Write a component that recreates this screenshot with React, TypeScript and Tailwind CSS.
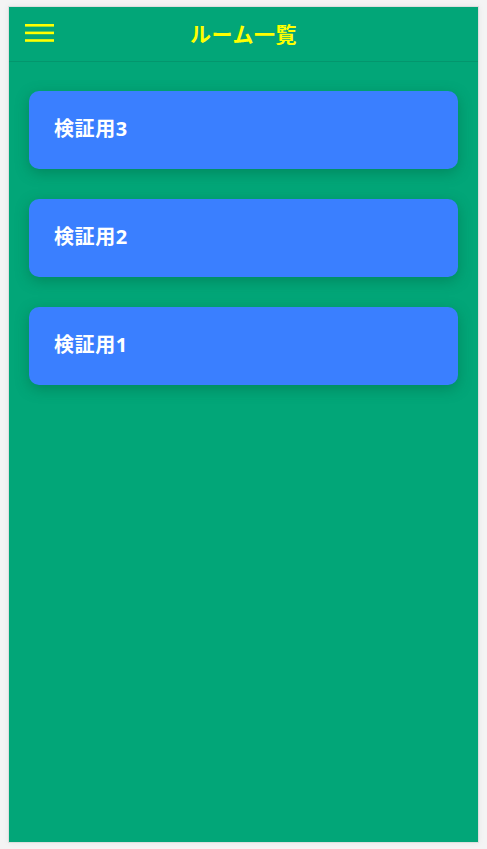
const rooms = ["検証用3", "検証用2", "検証用1"];

function MenuIcon() {
  return (
    <svg width="29" height="20" viewBox="0 0 29 20" className="block">
      <rect x="0" y="0" width="29" height="2.6" fill="#ffff00" />
      <rect x="0" y="7.6" width="29" height="2.6" fill="#ffff00" />
      <rect x="0" y="15.2" width="29" height="2.6" fill="#ffff00" />
    </svg>
  );
}

export default function App() {
  return (
    <div className="min-h-screen bg-[#f4f4f4] px-2 py-[6px] font-['Noto_Sans_CJK_JP',sans-serif]">
      <div className="flex h-[837px] flex-col border border-[#dedede] bg-[#02a678] shadow-[0_0_6px_rgba(0,0,0,0.06)]">
        <header className="grid h-[55px] grid-cols-[1fr_auto_1fr] items-center border-b border-[#03966d] px-4">
          <button type="button" className="justify-self-start">
            <MenuIcon />
          </button>
          <h1 className="pb-[1px] text-[21px] font-bold tracking-[0.5px] text-[#ffff00]">ルーム一覧</h1>
          <div />
        </header>

        <main className="flex flex-col gap-[30px] px-5 pt-[29px]">
          {rooms.map((room) => (
            <div
              key={room}
              className="flex h-[78px] items-center rounded-[10px] bg-[#3a7fff] pb-[3px] pl-[25px] shadow-[0_4px_14px_rgba(0,80,50,0.35)]"
            >
              <span className="font-['Noto_Sans','Noto_Sans_CJK_JP',sans-serif] text-[20px] font-bold tracking-[0.6px] text-white">
                {room}
              </span>
            </div>
          ))}
        </main>
      </div>
    </div>
  );
}
